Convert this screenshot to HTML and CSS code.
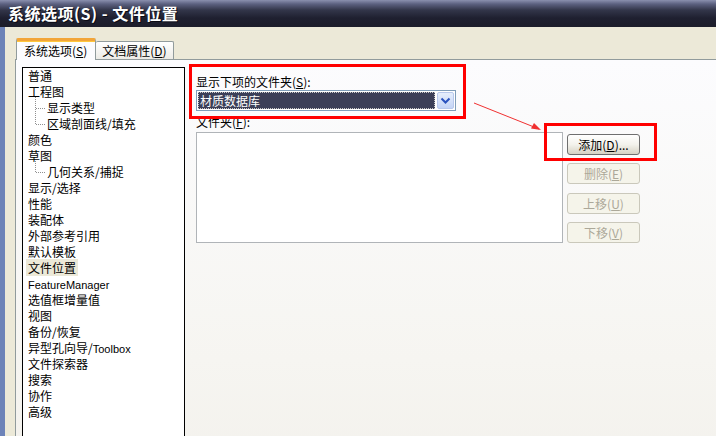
FILE: index.html
```html
<!DOCTYPE html>
<html lang="zh-CN">
<head>
  <meta charset="UTF-8">
  <title>系统选项(S) - 文件位置</title>
  <link rel="stylesheet" href="styles.css">
</head>
<body>
  <div class="window">
    <div class="titlebar">系统选项(S) - 文件位置</div>

    <div class="client">
      <!-- Tabs -->
      <div class="tabs">
        <div class="tab active">系统选项(<u>S</u>)</div>
        <div class="tab">文档属性(<u>D</u>)</div>
      </div>

      <div class="panel">
        <!-- Option tree -->
        <ul class="tree">
          <li>普通</li>
          <li>工程图</li>
          <li class="child">显示类型</li>
          <li class="child last">区域剖面线/填充</li>
          <li>颜色</li>
          <li>草图</li>
          <li class="child last">几何关系/捕捉</li>
          <li>显示/选择</li>
          <li>性能</li>
          <li>装配体</li>
          <li>外部参考引用</li>
          <li>默认模板</li>
          <li><span class="selected">文件位置</span></li>
          <li><span class="latin">FeatureManager</span></li>
          <li>选值框增量值</li>
          <li>视图</li>
          <li>备份/恢复</li>
          <li>异型孔向导/<span class="latin">Toolbox</span></li>
          <li>文件探索器</li>
          <li>搜索</li>
          <li>协作</li>
          <li>高级</li>
        </ul>

        <!-- File locations page -->
        <div class="page">
          <div class="label">显示下项的文件夹(<u>S</u>):</div>
          <div class="combo">
            <div class="combo-value">材质数据库</div>
            <div class="combo-btn">
              <svg width="11" height="8" viewBox="0 0 11 8"><path d="M1.5 1.5 L5.5 5.5 L9.5 1.5" fill="none" stroke="#2a52be" stroke-width="2"/></svg>
            </div>
          </div>
          <div class="label folder-label">文件夹(<u>F</u>):</div>
          <div class="folder-row">
            <div class="listbox"></div>
            <div class="buttons">
              <button class="btn">添加(<u>D</u>)...</button>
              <button class="btn" disabled>删除(<u>E</u>)</button>
              <button class="btn up" disabled>上移(<u>U</u>)</button>
              <button class="btn" disabled>下移(<u>V</u>)</button>
            </div>
          </div>
        </div>
      </div>
    </div>

    <!-- Red annotations drawn over the screenshot -->
    <div class="mark mark-combo"></div>
    <div class="mark mark-add"></div>
    <svg class="arrow" width="716" height="436" viewBox="0 0 716 436">
      <line x1="474" y1="103" x2="539" y2="129" stroke="#f03030" stroke-width="1"/>
      <path d="M541 130 L531 128.5 L534 123 Z" fill="#f03030"/>
    </svg>
  </div>
</body>
</html>
```

FILE: styles.css
```css
body { margin: 0; overflow: hidden; font-family: "Noto Sans CJK SC", "Liberation Sans", sans-serif; font-size: 12px; color: #000; }
u { text-decoration: underline; text-underline-offset: 1px; }

.window { position: relative; width: 716px; height: 436px; overflow: hidden; background: #ece9d8; }

.titlebar {
  height: 27px;
  line-height: 26px;
  padding-left: 8px;
  color: #fff;
  font-size: 16px;
  font-weight: bold;
  letter-spacing: 0.5px;
  text-shadow: 1px 1px 0 #0a0a14;
  background: linear-gradient(#8a90ae 0, #5c6180 4px, #33364a 10px, #1f2030 18px, #1c1d2a 27px);
}

.client {
  border-left: 5px solid #6d83b8;
  padding: 11px 0 0 10px;
  height: 400px;
}

/* Tabs */
.tabs { display: flex; align-items: flex-end; margin-left: 1px; position: relative; z-index: 1; }
.tab {
  height: 17px;
  line-height: 17px;
  padding: 0 6px;
  border: 1px solid #919b9c;
  border-bottom: none;
  border-radius: 2px 2px 0 0;
  background: linear-gradient(#ffffff, #ecebe6);
}
.tab.active {
  height: 19px;
  line-height: 20px;
  padding: 0 8px 0 7px;
  border-top: 3px solid #f2a53a;
  background: #fcfcfe;
  margin-bottom: -1px;
  box-shadow: inset 0 1px 0 #ffc83c;
}
.tab + .tab { border-left: none; }

/* Panel */
.panel {
  display: flex;
  gap: 11px;
  width: 760px;
  height: 420px;
  padding: 7px 0 0 6px;
  border: 1px solid #919b9c;
  background: linear-gradient(#fcfcfe, #f6f5f1 70%, #f3f1ec);
}

/* Tree */
.tree {
  list-style: none;
  margin: 0;
  padding: 0 0 0 3px;
  width: 158px;
  height: 400px;
  border: 1px solid #000;
  background: #fff;
}
.tree li { line-height: 16px; height: 16px; padding-left: 2px; white-space: nowrap; }
.tree li.child { position: relative; padding-left: 21px; }
.tree li.child::before {
  content: "";
  position: absolute;
  left: 9px;
  top: -3px;
  height: 19px;
  border-left: 1px dotted #909090;
}
.tree li.child.last::before { height: 11px; }
.tree li.child::after {
  content: "";
  position: absolute;
  left: 10px;
  top: 8px;
  width: 9px;
  border-top: 1px dotted #909090;
}
.tree .selected { background: #ece9d8; padding: 0 2px; margin-left: -2px; }
.latin { font-family: "Liberation Sans", sans-serif; font-size: 11px; }

/* Right page */
.page { padding-top: 7px; }
.label { line-height: 16px; height: 16px; }
.folder-label { margin-top: 3px; }

.combo {
  display: flex;
  gap: 2px;
  width: 256px;
  height: 19px;
  padding: 0 1px;
  align-items: center;
  border: 1px solid #7f9db9;
  background: #fff;
}
.combo-value {
  flex: 1;
  height: 15px;
  line-height: 15px;
  padding-left: 1px;
  color: #fff;
  background: #3c3f58;
  border: 1px dotted #c8c8c8;
}
.combo-btn {
  width: 17px;
  height: 17px;
  display: flex;
  align-items: center;
  justify-content: center;
  border-radius: 2px;
  background: linear-gradient(#e6eefc, #c4d4f6);
  border: 1px solid #b8c8ec;
  box-sizing: border-box;
}

.folder-row { display: flex; gap: 4px; margin-top: 2px; }
.listbox { width: 365px; height: 109px; border: 1px solid #b0b4b8; background: #fff; }
.buttons { display: flex; flex-direction: column; gap: 8px; padding-top: 2px; }
.btn {
  width: 73px;
  height: 21px;
  padding: 0;
  font: inherit;
  color: #000;
  border: 1px solid #6f6f6f;
  border-radius: 3px;
  background: linear-gradient(#ffffff, #f3f2ec 50%, #d6d2c4);
}
.btn:disabled { color: #aca899; border-color: #cac8bb; background: #f5f4ea; }
.btn.up { margin-top: 1px; }

/* Annotations */
.mark { position: absolute; border: 3px solid #ff0000; box-sizing: border-box; }
.mark-combo { left: 189px; top: 64px; width: 277px; height: 55px; }
.mark-add { left: 544px; top: 123px; width: 113px; height: 38px; }
.arrow { position: absolute; left: 0; top: 0; pointer-events: none; }
```
